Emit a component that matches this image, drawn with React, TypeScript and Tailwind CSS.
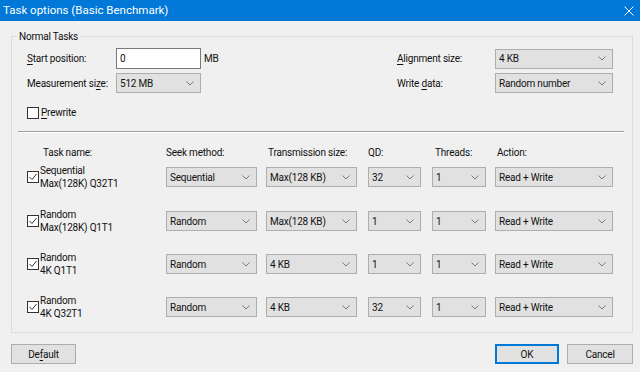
import React from 'react';

interface TaskRow {
  line1: string;
  line2: string;
  seek: string;
  size: string;
  qd: string;
  threads: string;
  action: string;
}

const tasks: TaskRow[] = [
  { line1: 'Sequential', line2: 'Max(128K) Q32T1', seek: 'Sequential', size: 'Max(128 KB)', qd: '32', threads: '1', action: 'Read + Write' },
  { line1: 'Random', line2: 'Max(128K) Q1T1', seek: 'Random', size: 'Max(128 KB)', qd: '1', threads: '1', action: 'Read + Write' },
  { line1: 'Random', line2: '4K Q1T1', seek: 'Random', size: '4 KB', qd: '1', threads: '1', action: 'Read + Write' },
  { line1: 'Random', line2: '4K Q32T1', seek: 'Random', size: '4 KB', qd: '32', threads: '1', action: 'Read + Write' },
];

const Chevron = () => (
  <svg width="8" height="5" viewBox="0 0 8 5" className="shrink-0">
    <path d="M0.5 0.5 L4 4 L7.5 0.5" fill="none" stroke="#7a7a7a" strokeWidth="1" />
  </svg>
);

const Combo = ({ value, width }: { value: string; width: string }) => (
  <div className={`${width} h-[20px] flex items-center justify-between bg-[#e1e1e1] border border-[#adadad] pl-[3px] pr-[6px]`}>
    <span className="whitespace-nowrap">{value}</span>
    <Chevron />
  </div>
);

const Check = ({ checked }: { checked: boolean }) => (
  <div className="w-[12px] h-[12px] shrink-0 border border-[#333333] bg-white flex items-center justify-center">
    {checked && (
      <svg width="10" height="10" viewBox="0 0 10 10">
        <path d="M1.5 5 L4 7.5 L8.5 2" fill="none" stroke="#333333" strokeWidth="1" />
      </svg>
    )}
  </div>
);

const U = ({ children }: { children: React.ReactNode }) => (
  <span className="underline underline-offset-[2px]">{children}</span>
);

export default function App() {
  return (
    <div className="w-[640px] h-[372px] bg-[#f0f0f0] flex flex-col text-[10px] tracking-[-0.2px] leading-[13px] text-[#111111] font-['Segoe_UI',Roboto,'Liberation_Sans',sans-serif]">
      {/* title bar */}
      <div className="h-[21px] bg-[#0078d7] flex items-center justify-between pl-[3px] pr-[6px] text-white text-[11.5px] tracking-normal">
        <span>Task options (Basic Benchmark)</span>
        <svg width="10" height="10" viewBox="0 0 10 10">
          <path d="M0.5 0.5 L9.5 9.5 M9.5 0.5 L0.5 9.5" stroke="#ffffff" strokeWidth="1" />
        </svg>
      </div>

      {/* group box */}
      <div className="relative ml-[11px] mt-[15px] w-[622px] h-[297px] border border-[#dcdcdc]">
        <span className="absolute left-[5px] top-[-7px] px-[2px] bg-[#f0f0f0]">Normal Tasks</span>

        <div className="pt-[11px] pl-[15px]">
          <div className="flex items-center h-[21px]">
            <div className="w-[370px] flex items-center">
              <span className="w-[89px]"><U>S</U>tart position:</span>
              <div className="w-[85px] h-[21px] bg-white border border-[#7a7a7a] flex items-center pl-[3px]">0</div>
              <span className="ml-[3px]">MB</span>
            </div>
            <span className="w-[98px]"><U>A</U>lignment size:</span>
            <Combo value="4 KB" width="w-[118px]" />
          </div>
          <div className="flex items-center h-[20px] mt-[4px]">
            <div className="w-[370px] flex items-center">
              <span className="w-[89px] whitespace-nowrap">Measurement si<U>z</U>e:</span>
              <Combo value="512 MB" width="w-[85px]" />
            </div>
            <span className="w-[98px]">Write <U>d</U>ata:</span>
            <Combo value="Random number" width="w-[118px]" />
          </div>
          <div className="flex items-center gap-[2px] mt-[13px] h-[13px]">
            <Check checked={false} />
            <span><U>P</U>rewrite</span>
          </div>
        </div>

        {/* separator */}
        <div className="ml-[6px] mr-[8px] mt-[12px] border-t border-t-[#a0a0a0] border-b border-b-white" />

        {/* task table */}
        <div className="pl-[15px] mt-[13px]">
          <div className="grid grid-cols-[139px_100px_102px_64px_63px_118px] h-[13px]">
            <span className="pl-[16px]">Task name:</span>
            <span>Seek method:</span>
            <span className="pl-[2px]">Transmission size:</span>
            <span>QD:</span>
            <span className="pl-[3px]">Threads:</span>
            <span className="pl-[2px]">Action:</span>
          </div>
          <div className="flex flex-col mt-[8px]">
            {tasks.map((t, i) => (
              <div
                key={i}
                className={`grid grid-cols-[139px_100px_102px_64px_63px_118px] grid-rows-[20px] items-center h-[20px] ${i === 0 ? '' : i === 1 ? 'mt-[24px]' : 'mt-[23px]'}`}
              >
                <div className="flex items-center gap-[1px]">
                  <Check checked={true} />
                  <div className="flex flex-col leading-[13px]">
                    <span>{t.line1}</span>
                    <span>{t.line2}</span>
                  </div>
                </div>
                <Combo value={t.seek} width="w-[91px]" />
                <Combo value={t.size} width="w-[91px]" />
                <Combo value={t.qd} width="w-[53px]" />
                <Combo value={t.threads} width="w-[54px]" />
                <Combo value={t.action} width="w-[118px]" />
              </div>
            ))}
          </div>
        </div>
      </div>

      {/* buttons */}
      <div className="flex items-center mt-[11px] pl-[11px] pr-[7px]">
        <button className="w-[65px] h-[20px] bg-[#e1e1e1] border border-[#adadad]">
          De<U>f</U>ault
        </button>
        <button className="ml-auto w-[64px] h-[20px] bg-[#e1e1e1] border border-[#0078d7] shadow-[inset_0_0_0_1px_#0078d7]">
          OK
        </button>
        <button className="ml-[8px] w-[66px] h-[20px] bg-[#e1e1e1] border border-[#adadad]">
          Cancel
        </button>
      </div>
    </div>
  );
}
